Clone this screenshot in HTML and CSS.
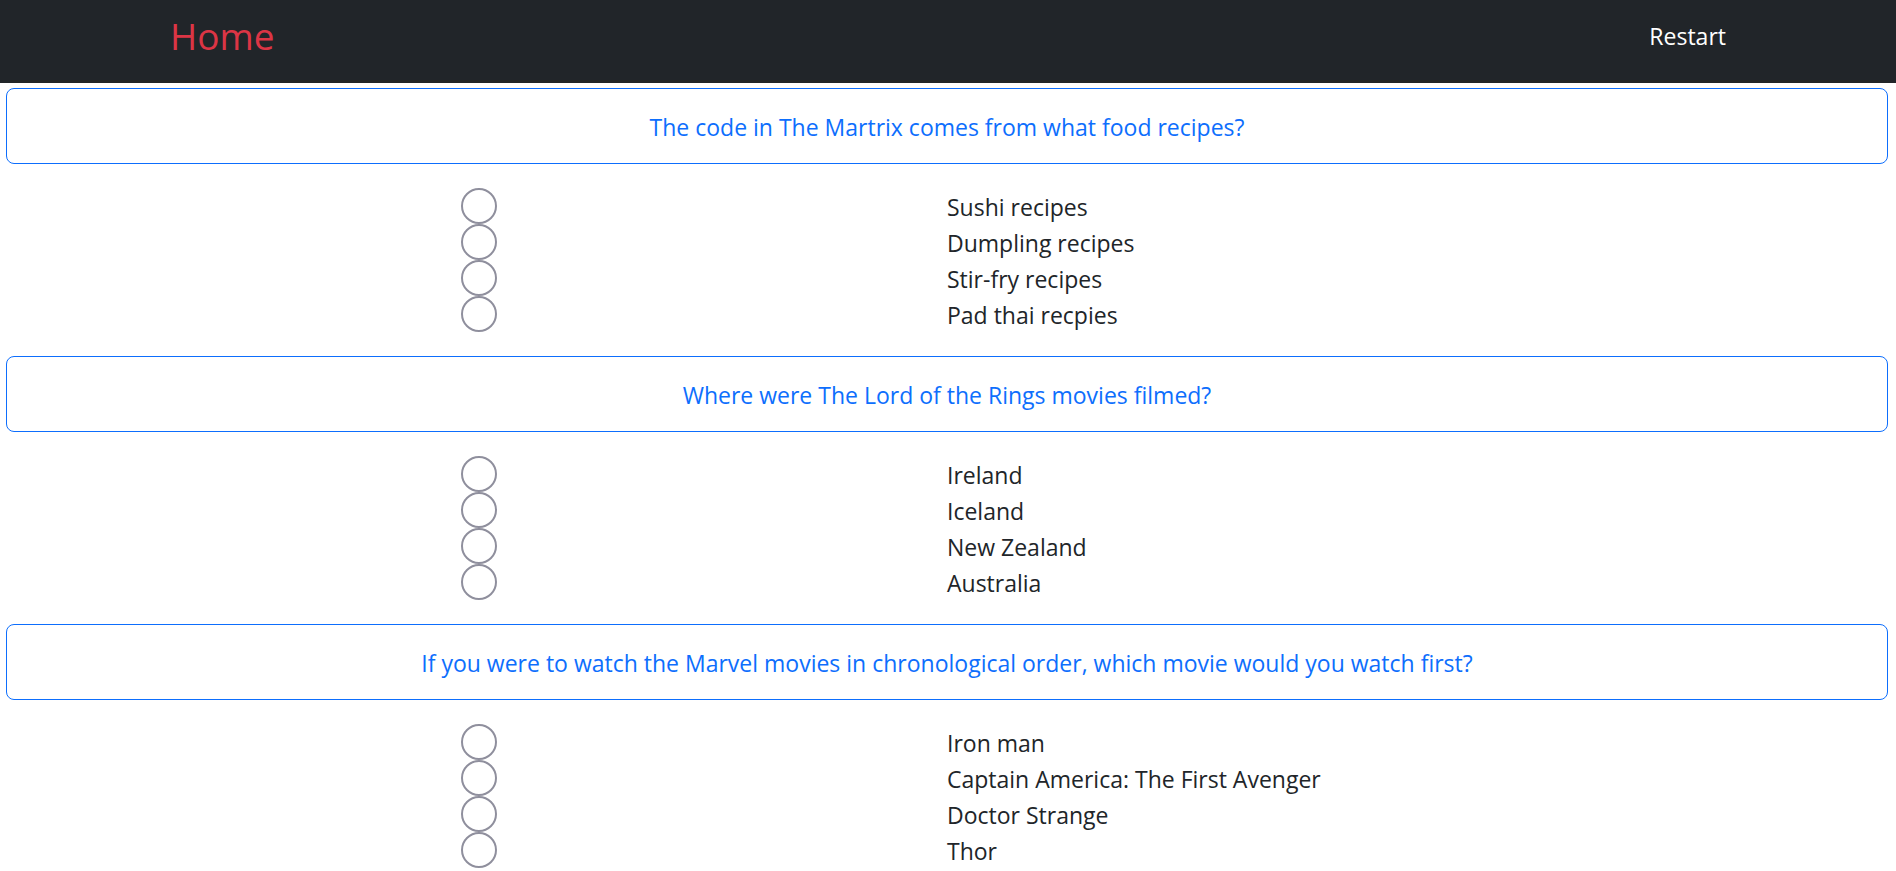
FILE: index.html
```html
<!DOCTYPE html>
<html lang="en">
<head>
<meta charset="utf-8">
<meta name="viewport" content="width=device-width, initial-scale=1">
<title>Movie Quiz</title>
<link rel="stylesheet" href="styles.css">
</head>
<body>
<nav class="navbar">
  <div class="navbar-inner">
    <a class="brand" href="#">Home</a>
    <a class="nav-link" href="#">Restart</a>
  </div>
</nav>
<main class="quiz">
  <fieldset class="question">
    <legend class="prompt">The code in The Martrix comes from what food recipes?</legend>
    <div class="answers">
      <label class="answer"><input class="radio" type="radio" name="q1"><span>Sushi recipes</span></label>
      <label class="answer"><input class="radio" type="radio" name="q1"><span>Dumpling recipes</span></label>
      <label class="answer"><input class="radio" type="radio" name="q1"><span>Stir-fry recipes</span></label>
      <label class="answer"><input class="radio" type="radio" name="q1"><span>Pad thai recpies</span></label>
    </div>
  </fieldset>
  <fieldset class="question">
    <legend class="prompt">Where were The Lord of the Rings movies filmed?</legend>
    <div class="answers">
      <label class="answer"><input class="radio" type="radio" name="q2"><span>Ireland</span></label>
      <label class="answer"><input class="radio" type="radio" name="q2"><span>Iceland</span></label>
      <label class="answer"><input class="radio" type="radio" name="q2"><span>New Zealand</span></label>
      <label class="answer"><input class="radio" type="radio" name="q2"><span>Australia</span></label>
    </div>
  </fieldset>
  <fieldset class="question">
    <legend class="prompt">If you were to watch the Marvel movies in chronological order, which movie would you watch first?</legend>
    <div class="answers">
      <label class="answer"><input class="radio" type="radio" name="q3"><span>Iron man</span></label>
      <label class="answer"><input class="radio" type="radio" name="q3"><span>Captain America: The First Avenger</span></label>
      <label class="answer"><input class="radio" type="radio" name="q3"><span>Doctor Strange</span></label>
      <label class="answer"><input class="radio" type="radio" name="q3"><span>Thor</span></label>
    </div>
  </fieldset>
</main>
</body>
</html>
```
FILE: styles.css
```css
* {
  box-sizing: border-box;
}

body {
  margin: 0;
  background: #fff;
  color: #212529;
  font-family: "Segoe UI", "Open Sans", sans-serif;
  font-size: 23px;
  line-height: 36px;
}

.navbar {
  background: #212529;
  padding: 7px 24px 18px;
}

.navbar-inner {
  display: flex;
  align-items: center;
  justify-content: space-between;
  max-width: 1556px;
  margin: 0 auto;
}

.brand {
  color: #dc3545;
  font-size: 37px;
  line-height: 58px;
  text-decoration: none;
}

.nav-link {
  color: #fff;
  text-decoration: none;
}

.quiz {
  display: flex;
  flex-direction: column;
  gap: 24px;
  padding: 5px 8px 0 6px;
}

.question {
  min-width: 0;
  margin: 0;
  padding: 0;
  border: 0;
}

.prompt {
  width: 100%;
  padding: 20px 24px 18px;
  border: 1px solid #0d6efd;
  border-radius: 8px;
  color: #0d6efd;
  text-align: center;
}

.answers {
  padding-top: 24px;
}

.answer {
  display: grid;
  grid-template-columns: 1fr 1fr;
  height: 36px;
  line-height: 38px;
}

.radio {
  appearance: none;
  justify-self: center;
  width: 36px;
  height: 36px;
  margin: 0 0 0 5px;
  border: 2px solid #8f8f9d;
  border-radius: 50%;
  background: #fff;
}

.radio:checked {
  border-color: #0d6efd;
  background: radial-gradient(circle, #0d6efd 45%, #fff 50%);
}
```
